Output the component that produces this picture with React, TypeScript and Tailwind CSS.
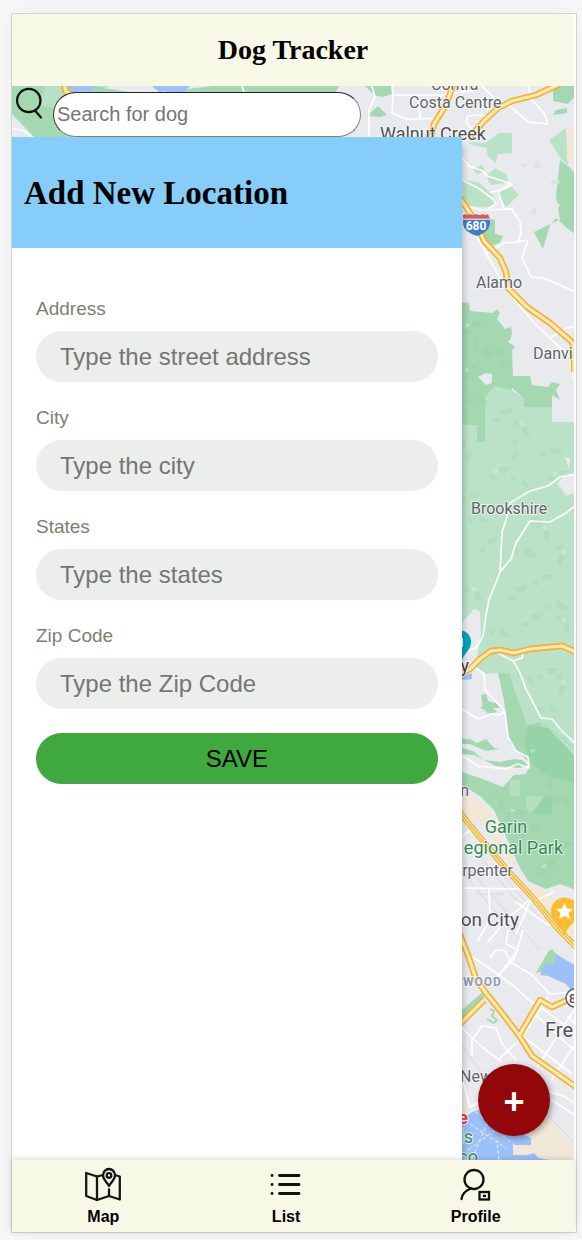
import React from "react";

const fields = [
  { id: "address", label: "Address", placeholder: "Type the street address" },
  { id: "city", label: "City", placeholder: "Type the city" },
  { id: "states", label: "States", placeholder: "Type the states" },
  { id: "zip", label: "Zip Code", placeholder: "Type the Zip Code" },
];

const highways = [
  "M455 80 L446 105 L434 124 L430 142",
  "M454 189 L476 222 L484 241 L500 258 L506 272 L508 288 L527 307 L550 323 L571 341 L574 346 L574 372",
  "M560 84 L536 95 L512 101 L498 108 L484 121 L470 137",
  "M460 674 L470 669 L480 659 L491 651 L500 650 L514 653 L530 649 L562 646 L576 652",
  "M458 930 L468 955 L476 979 L486 993 L502 1013 L518 1034 L532 1056 L552 1070 L576 1087",
  "M458 1026 L484 1000",
  "M519 1036 L540 1000 L552 1007 L576 996",
];

const interstate = "M458 810 L482 840 L508 871 L534 899 L558 929 L578 949";

const streets = [
  "M372 86 L375 97 L369 110 L369 137",
  "M392 86 L393 97 L392 113 L406 119 L424 119",
  "M394 95 L440 95 L476 90",
  "M418 96 L420 118 L434 119",
  "M480 84 L495 99 L510 106 L528 122 L548 124 L544 113 L532 100 L528 86",
  "M474 132 L466 122 L468 116 L480 115 L488 117",
  "M460 156 L469 166 L483 171 L487 176 L512 184 L498 191 L490 192",
  "M460 179 L478 188 L493 199 L496 204 L489 208",
  "M498 191 L504 209",
  "M460 204 L480 210 L512 209 L520 222 L521 233 L518 242 L528 240 L524 252 L522 258 L531 277 L543 278 L576 292",
  "M518 242 L504 243 L486 254",
  "M464 214 L487 255 L508 292 L535 324 L553 341 L572 358",
  "M552 337 L566 328 L576 327",
  "M571 358 L570 369 L576 383",
  "M576 474 L560 477 L548 486 L530 491 L510 503 L506 520 L502 532 L500 572 L489 600 L486 615 L483 636 L476 648 L466 651",
  "M576 505 L566 513 L550 522 L530 521 L516 543 L511 559 L500 572",
  "M498 653 L513 661 L522 658 L523 652",
  "M513 661 L517 667 L523 680 L525 687 L537 710 L541 718 L552 719 L563 732 L576 744",
  "M476 668 L484 674 L485 690 L505 711 L500 715 L491 714 L478 719 L462 709",
  "M505 713 L508 737 L516 751 L528 757 L529 768 L518 764 L506 769 L478 766 L462 755",
  "M462 888 L520 889 M462 836 L472 829",
  "M489 889 L490 920 L478 940",
  "M531 899 L516 934",
  "M528 901 L506 920 L488 942",
  "M516 902 L548 925 L576 916",
  "M534 901 L554 892",
  "M508 930 L506 944 L518 950 L500 974",
  "M474 958 L492 970 L514 986 L530 1001 L546 1011 L576 1034",
  "M490 958 L496 950 L504 950 L512 963 L532 975 L550 994 L576 992",
  "M523 930 L514 959 L497 976",
  "M462 1028 L482 1047 L501 1061",
  "M472 1055 L472 1040 L482 1026 L496 1028 L502 1044 L516 1060",
  "M520 1034 L572 1074",
  "M548 997 L520 1040 L500 1058",
  "M576 1007 L538 1066 M568 1016 L576 1026 M576 1043 L552 1079",
  "M530 1010 L576 1052",
  "M550 1092 L564 1096 L576 1104",
  "M552 1100 L576 1116",
  "M460 1070 L470 1107 L480 1102",
];

const darkGreen = [
  "12,86 92,86 140,94 180,90 212,86 339,86 336,92 334,137 34,137 12,114",
  "365,86 392,86 392,94 382,97 374,95",
  "370,113 378,106 387,115 380,117 368,116",
  "553,86 576,86 576,95 568,104 553,101",
  "556,110 567,108 567,113 553,115",
  "560,160 568,166 576,174 576,235 567,228 556,218 550,225 543,249 534,232 554,222 560,220 556,196",
  "488,219 495,220 495,234 503,236 500,243 490,246 480,237",
  "460,302 469,303 470,311 493,313 497,309 500,313 497,319 505,329 508,328 511,327 512,333 510,341 515,348 512,350 513,376 524,376 530,376 532,385 548,387 552,382 560,384 556,390 560,400 552,395 552,407 524,407 524,398 512,388 512,390 495,386 485,397 485,442 477,442 477,425 460,425",
  "483,240 493,240 491,246 485,244",
  "498,673 510,674 514,688 522,710 527,725 541,722 551,729 576,749 576,890 560,884 546,889 528,881 519,866 507,839 494,810 480,796 462,785 462,772 480,778 503,787 514,775 526,774 530,764 524,757 510,744 506,718 504,700",
  "481,695 486,694 490,706 497,712 488,714 483,708",
  "462,739 470,739 477,743 486,739 494,748 499,749 486,751 470,744 462,744",
  "462,748 473,751 484,760 500,762 514,759 522,760 528,765 520,768 496,766 474,755 462,754",
  "462,1010 484,991 484,1000 462,1023",
  "536,973 548,952 552,949 557,955 556,964 546,971",
  "480,708 489,712 484,705",
  "482,700 496,703 500,708 490,708",
];

const lightGreen = [
  "46,86 110,86 90,95 70,92 55,112 38,106",
  "460,420 485,420 485,384 496,380 524,398 524,407 552,407 552,422 576,422 576,750 541,722 527,725 510,675 498,673 486,674 476,668 478,650 481,634 480,612 474,609 460,630",
  "470,142 485,143 499,133 512,133 512,153 498,154 496,163 488,156 486,148 469,144",
  "486,176 495,168 507,175 508,183 491,185",
  "462,180 478,182 494,196 496,204 489,207 464,206",
  "497,193 512,187 519,195 506,207",
  "473,170 482,164 485,170 477,174",
  "549,140 566,128 568,165 561,159",
];

// Faint relief facets, positioned as [x, y, size, rotation].
const facets = [
  [470, 322, 12, 20], [486, 346, 14, 70], [506, 360, 12, 130], [468, 366, 11, 0], [480, 396, 12, 50],
  [500, 410, 13, 10], [526, 425, 12, 90], [550, 446, 14, 35], [472, 452, 13, 120], [498, 468, 12, 15],
  [524, 478, 11, 75], [470, 492, 10, 30], [549, 530, 13, 110], [486, 540, 12, 5], [526, 546, 15, 60],
  [566, 556, 13, 140], [542, 574, 12, 25], [514, 588, 14, 0], [478, 590, 12, 85], [556, 600, 15, 45],
  [530, 614, 14, 15], [568, 622, 11, 100], [502, 628, 12, 60], [545, 668, 14, 20], [566, 686, 12, 130],
  [550, 704, 12, 50], [530, 675, 10, 80], [516, 808, 12, 40], [552, 776, 13, 110],
  [560, 840, 15, 30], [545, 862, 13, 0], [564, 796, 12, 60], [504, 800, 11, 120], [536, 748, 12, 35],
  [478, 336, 9, 100], [538, 508, 12, 0], [558, 470, 10, 20], [520, 452, 12, 140], [480, 516, 10, 45],
  [528, 826, 12, 15], [556, 740, 10, 50],
];

function Facets() {
  return (
    <g>
      {facets.map(([x, y, s, r], i) => (
        <g key={i} transform={`rotate(${r} ${x} ${y})`}>
          <path d={`M${x} ${y} l${s} ${-s / 3} l${-s / 5} ${s / 2} l${-s / 2} ${s / 5}z M${x - 7} ${y + 12} l${s / 2} -5 l${s / 4} 6z`} fill="#8fca9f" opacity=".2" />
          {i % 3 === 0 && <path d={`M${x - 4} ${y + 4} l${s / 2} -3 l${-s / 4} 6z`} fill="#dff2cd" opacity=".5" />}
        </g>
      ))}
      <path d="M536 160l4 3v5h-6zM550 182l8-3 2 4-8 2zM530 212l5-4 2 3-3 4zM520 165l7-2-1 5z" fill="#dfe1e5" />
    </g>
  );
}

function MapCanvas() {
  return (
    <svg
      className="absolute inset-0 h-full w-full"
      viewBox="12 86 562 1074"
      preserveAspectRatio="xMaxYMin slice"
      aria-hidden="true"
    >
      <rect x="0" y="80" width="590" height="1090" fill="#e8eaed" />
      {lightGreen.map((p) => <polygon key={p} points={p} fill="#bae2c6" />)}
      {darkGreen.map((p) => <polygon key={p} points={p} fill="#a3d8b1" />)}
      <polygon points="46,86 64,86 70,94 54,108 38,104" fill="#b8e1c4" />
      <path d="M541 722L576 750V778L556 768L546 748Z" fill="#bae2c6" />
      <path d="M528 725L548 728L576 757V784L548 776L532 764L524 744ZM532 800L552 796V814H532Z" fill="#97d3a8" />
      <path d="M526 796L544 796L538 806L530 814L526 808ZM510 780H520V796H510Z" fill="#b4dfc0" />
      <path d="M66 86H96L90 92L80 90L76 94Z M152 86H190L184 92H170L164 91L160 93Z" fill="#9cc0f9" />
      <path d="M462 623L474 609L480 612L479 642L470 658H460Z" fill="#e8eaed" />
      <path d="M478 377L486 373L492 374V383L486 385Z M557 484L563 477L576 472V492L566 496L560 486Z M507 341L512 340V345Z M565 457L570 458L569 470Z M555 205L558 203L560 205L558 208Z" fill="#e8eaed" />
      <Facets />
      <path d="M462 794L474 797L489 809L493 820L504 839L508 848L516 864L513 866L500 850L484 826L476 820L468 821L462 815Z" fill="#f1e8d8" />
      <path d="M528 885L546 890L556 901L576 897V944L554 921L532 895Z M569 128H576V166L567 160L567 133Z" fill="#f1e8d8" />
      <path d="M460 1090L468 1110L462 1125Z M533 1100L576 1148V1162H460V1150L520 1136Z" fill="#f1e8d8" />
      <path d="M462 1120L472 1112L486 1108L494 1121L516 1130L531 1138V1145H513V1155H527L534 1153L539 1158L550 1160H462Z" fill="#9cc0f9" />
      <path d="M540 975L545 964L554 964L556 954L576 966V996L566 984L548 976ZM462 676L472 673L472 679L462 680Z" fill="#9cc0f9" />
      <path d="M468 1150L520 1112M476 1112L516 1147M488 1122L472 1158M470 1124L506 1148M499 1160L497 1140" stroke="#eef3e9" strokeWidth="1" strokeDasharray="4 2" fill="none" />
      <path d="M462 860L496 900L540 950M462 872L482 896L520 940M500 872L540 918M476 852L518 902M476 894H504M462 1046L490 1084M546 1113L574 1143" stroke="#d4d7dc" strokeWidth="1" fill="none" />

      <g fill="none" stroke="#ffffff" strokeWidth="1.7" strokeLinejoin="round" strokeLinecap="round">
        {streets.map((d) => <path key={d} d={d} />)}
        <path d="M12 128L24 131L32 137M242 86L244 92" />
      </g>
      <g fill="none" stroke="#f3b02e" strokeWidth="6.400" strokeLinejoin="round">
        {highways.map((d) => <path key={d} d={d} />)}
        <path d="M64 84L66 92L72 94" />
      </g>
      <g fill="none" stroke="#fee9b2" strokeWidth="3.200" strokeLinejoin="round">
        {highways.map((d) => <path key={d} d={d} />)}
        <path d="M64 84L66 92L72 94" />
      </g>
      <g fill="none" strokeLinejoin="round">
        <path d={interstate} stroke="#f3b02e" strokeWidth="6" />
        <path d={interstate} stroke="#fee9b2" strokeWidth="3.600" />
        <path d={interstate} stroke="#f3b02e" strokeWidth="1.200" />
      </g>
      <path d="M490 1009L494 1011L492 1016L497 1020L494 1023L487 1019" fill="none" stroke="#a3d8b1" strokeWidth="1.800" />

      <path d="M463 219V215L465 214Q467 216 470 214Q473 216 476 214Q480 216 483 214Q486 216 488 214L490 219Z" fill="#d85c5d" />
      <path d="M463 219H490V224Q489 232 477 236Q464 232 463 224Z" fill="#3e7dcc" />
      <path d="M463 219.200H490" stroke="#ffffff" strokeWidth="1" />
      <text x="476" y="230" textAnchor="middle" fontFamily="Roboto, sans-serif" fontSize="12" fontWeight="700" fill="#ffffff">680</text>

      <g fontFamily="Roboto, sans-serif" fill="#5f6368" stroke="#ffffff" strokeWidth="2" strokeOpacity=".7" paintOrder="stroke" strokeLinejoin="round">
        <text x="431" y="90" fontSize="16">Contra</text>
        <text x="409" y="108" fontSize="16">Costa Centre</text>
        <text x="380" y="140" fontSize="18" fill="#504e55">Walnut Creek</text>
        <text x="476" y="288" fontSize="16">Alamo</text>
        <text x="533" y="359" fontSize="16">Danville</text>
        <text x="471" y="514" fontSize="16">Brookshire</text>
        <text x="469" y="672" fontSize="18" fill="#3c4043" textAnchor="end">y</text>
        <text x="469" y="796" fontSize="16" textAnchor="end">n</text>
        <text x="506" y="833" fontSize="18" fill="#338a55" textAnchor="middle">Garin</text>
        <text x="563" y="854" fontSize="18" fill="#338a55" textAnchor="end">egional Park</text>
        <text x="513" y="876" fontSize="16" textAnchor="end">rpenter</text>
        <text x="519" y="926" fontSize="19" fill="#504e55" textAnchor="end">on City</text>
        <text x="463" y="986" fontSize="12" fontWeight="700" letterSpacing="1" fill="#8c9bb3">WOOD</text>
        <text x="545" y="1037" fontSize="20" fill="#504e55">Fre</text>
        <text x="460" y="1082" fontSize="16">New</text>
        <text x="468" y="1124" fontSize="19" fontWeight="700" fill="#db4437" textAnchor="end">e</text>
        <text x="473" y="1143" fontSize="18" fill="#338a55" textAnchor="end">ls</text>
        <text x="478" y="1163" fontSize="18" fill="#338a55" textAnchor="end">co</text>
      </g>

      <path d="M462 661C460 652 450 651 450 642A10.500 11.500 0 0 1 471 642C471 651 464 652 462 661Z" fill="#00a3b8" />
      <rect x="456" y="638" width="7" height="9" fill="#ffffff" />
      <path d="M564.500 936C562 925 551 923 551 911A13.500 13.500 0 0 1 578 911C578 923 567 925 564.500 936Z" fill="#fbbc2d" />
      <path d="M564.500 903L567 908.500L573 909L568.500 913L570 919L564.500 916L559 919L560.500 913L556 909L562 908.500Z" fill="#ffffff" />
      <circle cx="575" cy="998" r="9" fill="#ffffff" stroke="#5f6368" strokeWidth="1.500" />
      <text x="569" y="1003" fontFamily="Roboto, sans-serif" fontSize="13" fontWeight="500" fill="#4c4f54">8</text>
    </svg>
  );
}

function SearchIcon() {
  return (
    <svg className="h-9 w-7 shrink-0" viewBox="0 0 28 36" fill="none" stroke="#111111" strokeWidth="2.200" strokeLinecap="round" aria-hidden="true">
      <circle cx="12.800" cy="14.500" r="11.700" />
      <path d="M19 24.500L25 31.500" />
    </svg>
  );
}

function MapIcon() {
  return (
    <svg className="h-9 w-9" viewBox="0 0 36 36" fill="none" stroke="#161616" strokeWidth="2.300" strokeLinejoin="round" strokeLinecap="round" aria-hidden="true">
      <path d="M18 8L12 9.500L1.200 6V29L12 33L24 29L34.800 32.500V9.500L31.500 8.500" />
      <path d="M12 9.500V33M24 22.500V29" />
      <path d="M24 19C22 15 18 12.500 18 8.500A6 6.500 0 0 1 30 8.500C30 12.500 26 15 24 19Z" />
      <circle cx="24" cy="8.500" r="2.300" />
    </svg>
  );
}

function ListIcon() {
  return (
    <svg className="h-9 w-9" viewBox="0 0 36 36" stroke="#111111" strokeWidth="2.800" strokeLinecap="round" aria-hidden="true">
      <path d="M11.500 8.500H31M11.500 17.500H31M11.500 26.500H31" />
      <path d="M4 8.500H4.100M4 17.500H4.100M4 26.500H4.100" />
    </svg>
  );
}

function ProfileIcon() {
  return (
    <svg className="h-9 w-9" viewBox="0 0 36 36" fill="none" stroke="#111111" strokeWidth="2.300" strokeLinecap="round" aria-hidden="true">
      <circle cx="16" cy="12.500" r="9.500" />
      <path d="M13 21.500C7.500 23.500 4 27.500 3.500 32" />
      <rect x="21.500" y="25" width="9.500" height="7.500" />
      <rect x="25.500" y="28.300" width="2" height="1.200" strokeWidth="1.200" />
    </svg>
  );
}

const tabs = [
  { label: "Map", Icon: MapIcon },
  { label: "List", Icon: ListIcon },
  { label: "Profile", Icon: ProfileIcon },
];

export default function App() {
  return (
    <div className="flex min-h-screen flex-col bg-[#f8f8f8] pt-[13px] pr-[5px] pb-[7px] pl-[11px] font-['Liberation_Sans',Arial,sans-serif] text-black">
      <div className="flex flex-1 flex-col border border-[#d0d2d6] bg-white pr-[2px] shadow-[0_0_24px_rgba(0,0,0,0.06)]">
        <header className="flex h-18 items-center justify-center bg-[#f8f8e6]">
          <h1 className="font-['Liberation_Serif',serif] text-[28px] leading-8 font-bold">Dog Tracker</h1>
        </header>

        <main className="relative flex flex-1 flex-col overflow-hidden">
          <MapCanvas />
          <form role="search" className="relative flex h-[51px] items-start gap-[9px] pl-1">
            <SearchIcon />
            <input
              type="search"
              aria-label="Search for dog"
              placeholder="Search for dog"
              className="mt-[6px] h-[45px] w-[308px] rounded-full border border-t-[#222222] border-r-[#808080] border-b-[#808080] border-l-[#333333] bg-white px-[3px] text-xl placeholder:text-[#757575] focus:outline-none"
            />
          </form>

          <section className="relative flex w-4/5 flex-1 flex-col bg-white shadow-[2px_8px_6px_rgba(0,0,0,0.2)]">
            <div className="flex h-[111px] items-center bg-[#87cdfa] px-3">
              <h2 className="font-['Liberation_Serif',serif] text-[33px] leading-10 font-bold">Add New Location</h2>
            </div>
            <form className="flex flex-col gap-6 px-6 pt-[49px]">
              {fields.map((field) => (
                <div key={field.id} className="flex flex-col gap-[10px]">
                  <label htmlFor={field.id} className="text-[19px] leading-6 text-[#75836f]">{field.label}</label>
                  <input
                    id={field.id}
                    type="text"
                    placeholder={field.placeholder}
                    className="h-[51px] w-full rounded-full bg-[#eceeeb] px-6 text-2xl placeholder:text-[#757575] focus:outline-none"
                  />
                </div>
              ))}
              <button type="button" className="h-[51px] w-full rounded-full bg-[#3fa83f] text-2xl">SAVE</button>
            </form>
          </section>

          <button
            type="button"
            aria-label="Add location"
            className="absolute right-6 bottom-6 flex size-18 items-center justify-center rounded-full bg-[#93070b] pt-1 text-4xl font-bold text-white shadow-[2px_2px_6px_rgba(0,0,0,0.35)]"
          >
            +
          </button>
        </main>

        <nav className="relative flex h-18 items-start justify-around bg-[#f8f8e6] pt-[7px] shadow-[0_-1px_6px_rgba(0,0,0,0.15)]">
          {tabs.map(({ label, Icon }) => (
            <a key={label} href={`#${label.toLowerCase()}`} className="flex flex-col items-center gap-1 text-base leading-5 font-bold">
              <Icon />
              {label}
            </a>
          ))}
        </nav>
      </div>
    </div>
  );
}
